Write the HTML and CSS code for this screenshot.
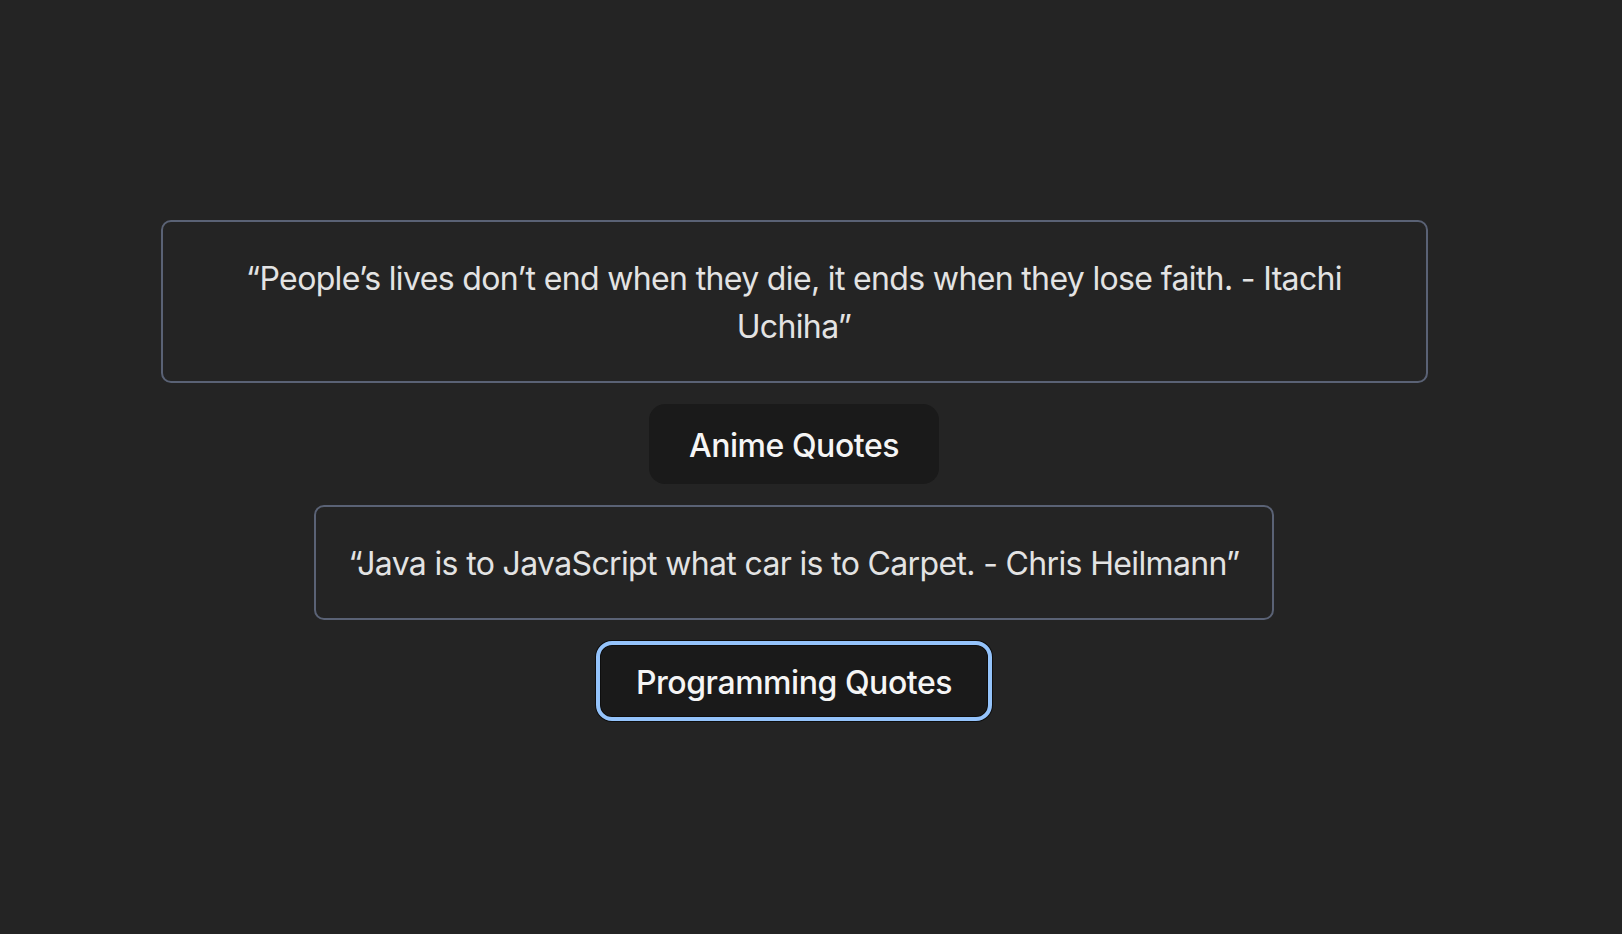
FILE: index.html
```html
<!DOCTYPE html>
<html lang="en">
<head>
<meta charset="utf-8">
<title>Quotes</title>
<link rel="stylesheet" href="styles.css">
</head>
<body>
<main class="app">
  <p class="quote quote-wide">“People’s lives don’t end when they die, it ends when they lose faith. - Itachi Uchiha”</p>
  <button class="btn" type="button">Anime Quotes</button>
  <p class="quote">“Java is to JavaScript what car is to Carpet. - Chris Heilmann”</p>
  <button class="btn btn-focus" type="button">Programming Quotes</button>
</main>
</body>
</html>
```

FILE: styles.css
```css
html, body {
  margin: 0;
  padding: 0;
  background: #242424;
}

body {
  font-family: Inter, "Noto Sans", sans-serif;
  color: rgba(255, 255, 255, 0.87);
}

.app {
  min-height: 934px;
  box-sizing: border-box;
  display: flex;
  flex-direction: column;
  align-items: center;
  justify-content: center;
  gap: 21px;
  padding: 6px 34px 0 0;
}

.quote {
  margin: 0;
  box-sizing: border-box;
  max-width: 1267px;
  padding: 33px 32px 30px;
  border: 2px solid #5a6275;
  border-radius: 10px;
  font-size: 32px;
  line-height: 48px;
  letter-spacing: -0.65px;
  text-align: center;
  color: #e3e3e3;
}

.btn {
  font-family: inherit;
  font-size: 32px;
  font-weight: 500;
  line-height: 38px;
  letter-spacing: -0.45px;
  color: #f5f5f5;
  background: #1a1a1a;
  border: 2px solid transparent;
  border-radius: 16px;
  padding: 21px 38px 17px;
  cursor: pointer;
}

.btn-focus {
  border-color: #94c3fb;
  border-width: 4px;
  padding: 19px 36px 15px;
  box-shadow: 0 0 0 1px #0e0e0e, inset 0 0 0 1px #0e0e0e;
}
```
